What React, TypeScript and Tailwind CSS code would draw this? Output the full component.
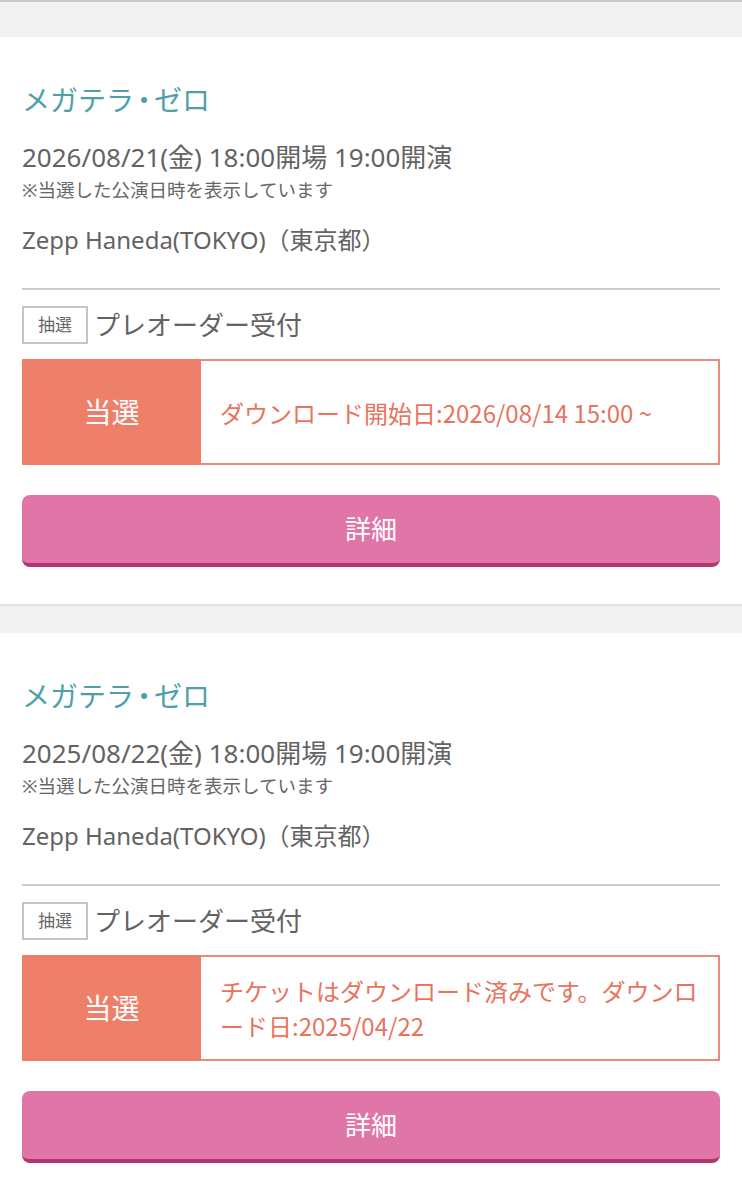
const sans = "font-['Noto_Sans','Noto_Sans_CJK_JP',sans-serif]";

type Ticket = {
  title: [string, string];
  date: string;
  venue: string;
  status: string;
};

const tickets: Ticket[] = [
  {
    title: ["メガテラ", "ゼロ"],
    date: "2026/08/21(金) 18:00開場 19:00開演",
    venue: "Zepp Haneda(TOKYO)（東京都）",
    status: "ダウンロード開始日:2026/08/14 15:00 ~",
  },
  {
    title: ["メガテラ", "ゼロ"],
    date: "2025/08/22(金) 18:00開場 19:00開演",
    venue: "Zepp Haneda(TOKYO)（東京都）",
    status: "チケットはダウンロード済みです。ダウンロード日:2025/04/22",
  },
];

function TicketCard({ t }: { t: Ticket }) {
  return (
    <section className="bg-white px-[22px] pt-[43px] pb-[37px]">
      <h2 className="text-[28px] leading-[40px] text-[#4f9fa9]">
        {t.title[0]}
        <span className="inline-block w-[20px] text-center [font-feature-settings:'palt']">・</span>
        {t.title[1]}
      </h2>
      <p className="mt-[20px] text-[26px] leading-[34px] text-[#636363]">{t.date}</p>
      <p className="mt-[4px] text-[18.5px] leading-[24px] text-[#666]">※当選した公演日時を表示しています</p>
      <p className="mt-[22px] text-[24px] leading-[32px] text-[#636363]">{t.venue}</p>

      <hr className="mt-[32px] border-0 h-[2px] bg-[#cccccc]" />

      <div className="mt-[16px] flex items-center gap-[6px]">
        <span className="flex h-[38px] w-[66px] items-center justify-center border-2 border-[#c4c4c4] text-[17px] text-[#666]">
          抽選
        </span>
        <span className="text-[26px] leading-[38px] text-[#636363]">プレオーダー受付</span>
      </div>

      <div className="mt-[15px] flex h-[106px]">
        <div className="flex w-[179px] shrink-0 items-center justify-center bg-[#ee7f69] text-[28px] text-white">
          当選
        </div>
        <div className="flex flex-1 items-center border-2 border-l-0 border-[#e98c78] pl-[19px] pr-[10px]">
          <p className="font-['Noto_Sans_CJK_JP',sans-serif] text-[24px] leading-[35px] text-[#e8745e]">
            {t.status}
          </p>
        </div>
      </div>

      <button className="mt-[30px] flex h-[72px] w-full items-center justify-center rounded-lg border-b-4 border-[#b3356f] bg-[#e075a8] text-[26px] text-white">
        詳細
      </button>
    </section>
  );
}

export default function App() {
  return (
    <div className={`${sans} min-h-screen bg-white`}>
      <div className="h-[37px] border-t-2 border-[#cacaca] bg-[#f2f2f2]" />
      {tickets.map((t, i) => (
        <div key={i}>
          {i > 0 && <div className="h-[29px] border-t-2 border-[#e2e2e2] bg-[#f2f2f2]" />}
          <TicketCard t={t} />
        </div>
      ))}
      <div className="h-[29px] border-t-2 border-[#e2e2e2] bg-[#f2f2f2]" />
    </div>
  );
}
